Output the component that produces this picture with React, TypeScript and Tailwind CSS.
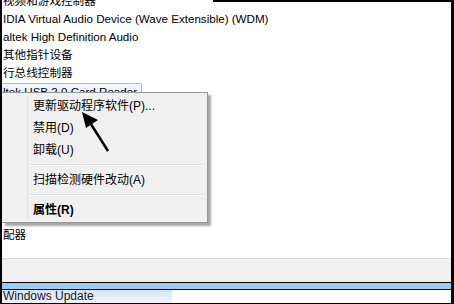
const font = { fontFamily: '"Liberation Sans", "Noto Sans CJK SC", sans-serif' };

const rows = [
  '视频和游戏控制器',
  'IDIA Virtual Audio Device (Wave Extensible) (WDM)',
  'altek High Definition Audio',
  '其他指针设备',
  '行总线控制器',
  'ltek USB 2.0 Card Reader',
  '', '', '', '', '', '', '',
  '配器',
];

function ContextMenu() {
  return (
    <div className="absolute left-0 top-[92px] w-[206px] border-y border-r border-[#979797] bg-[#f0f0f0] pt-[2px] pb-px shadow-[3px_3px_2px_rgba(0,0,0,0.35)]">
      {/* gutter line */}
      <div className="absolute left-[25px] top-px bottom-px w-[2px] border-l border-[#e2e3e3] border-r-white" />
      <MenuItem label="更新驱动程序软件(P)..." />
      <MenuItem label="禁用(D)" />
      <MenuItem label="卸载(U)" />
      <Separator />
      <MenuItem label="扫描检测硬件改动(A)" />
      <Separator />
      <MenuItem label="属性(R)" bold />
    </div>
  );
}

function MenuItem({ label, bold }: { label: string; bold?: boolean }) {
  return (
    <div className={`h-[22px] pl-[31px] leading-[22px] text-[12px] text-black ${bold ? 'font-bold' : ''}`}>
      {label}
    </div>
  );
}

function Separator() {
  return (
    <div className="h-[8px] flex items-center pl-[27px] pr-[2px]">
      <div className="h-[2px] w-full border-t border-[#e0e0e0] border-b-white border-b" />
    </div>
  );
}

function Arrow() {
  return (
    <svg className="absolute left-0 top-0 pointer-events-none" width="200" height="200" viewBox="0 0 200 200">
      <line x1="106" y1="151" x2="87" y2="121" stroke="#000" strokeWidth="2.5" />
      <polygon points="80,112 96,120 84,128" fill="#000" />
    </svg>
  );
}

export default function App() {
  return (
    <div className="relative w-[454px] h-[304px] bg-black pl-[2px] pr-[3px] pb-px flex flex-col overflow-hidden" style={font}>
      <div className="absolute top-0 left-[213px] right-0 h-[2px] bg-black z-10" />
      <div className="relative h-[258px] bg-white overflow-hidden">
        <div className="-mt-[8px] pl-px">
          {rows.map((r, i) => (
            <div key={i} className="h-[18px] flex items-center">
              {i === 5 ? (
                <span className="-ml-[3px] pl-[2px] pr-[4px] h-[17px] leading-[15px] border border-[#a3bcd9] rounded-[2px] bg-gradient-to-b from-[#f4f8fd] to-[#dde9f9] text-[11.6px] text-black whitespace-nowrap">
                  {r}
                </span>
              ) : (
                <span className="text-[11.6px] text-black whitespace-nowrap leading-[18px]">{r}</span>
              )}
            </div>
          ))}
        </div>
        <ContextMenu />
        <Arrow />
      </div>
      <div className="h-px bg-[#d8d8d8]" />
      <div className="h-[23px] bg-[#f0f0f0]" />
      <div className="h-px bg-black" />
      <div className="h-[6px] bg-[#99cdf5]" />
      <div className="h-px bg-black" />
      <div className="h-[13px] bg-white flex">
        <div className="w-[170px] bg-gradient-to-b from-[#d6e6f8] to-[#eef4fc] pl-px text-[12px] leading-[13px] text-[#1a1a1a] whitespace-nowrap">
          Windows Update
        </div>
      </div>
    </div>
  );
}
